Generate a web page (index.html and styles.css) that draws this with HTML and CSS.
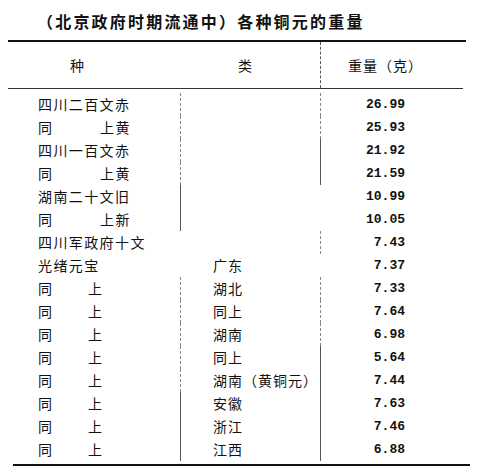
FILE: index.html
```html
<!DOCTYPE html>
<html lang="zh">
<head>
<meta charset="utf-8">
<title>各种铜元的重量</title>
<link rel="stylesheet" href="styles.css">
</head>
<body>
<div class="page">
  <h1 class="title">（北京政府时期流通中）各种铜元的重量</h1>
  <div class="table">
    <div class="head">
      <div class="head-kind"><span>种</span><span>类</span></div>
      <div class="head-weight">重量（克）</div>
    </div>
    <div class="body">
      <div class="row"><div class="c1">四川二百文赤</div><div class="c2 e-dash"></div><div class="c3 e-dash">26.99</div></div>
      <div class="row"><div class="c1"><span class="lead-wide">同</span>上黄</div><div class="c2 e-dash"></div><div class="c3 e-dash">25.93</div></div>
      <div class="row"><div class="c1">四川一百文赤</div><div class="c2 e-dash"></div><div class="c3 e-solid">21.92</div></div>
      <div class="row"><div class="c1"><span class="lead-wide">同</span>上黄</div><div class="c2 e-dash"></div><div class="c3 e-solid">21.59</div></div>
      <div class="row"><div class="c1">湖南二十文旧</div><div class="c2 e-solid"></div><div class="c3">10.99</div></div>
      <div class="row"><div class="c1"><span class="lead-wide">同</span>上新</div><div class="c2 e-solid"></div><div class="c3">10.05</div></div>
      <div class="row"><div class="c1">四川军政府十文</div><div class="c2"></div><div class="c3 e-dash">7.43</div></div>
      <div class="row"><div class="c1">光绪元宝</div><div class="c2">广东</div><div class="c3">7.37</div></div>
      <div class="row"><div class="c1"><span class="lead">同</span>上</div><div class="c2 e-dash">湖北</div><div class="c3 e-dash">7.33</div></div>
      <div class="row"><div class="c1"><span class="lead">同</span>上</div><div class="c2 e-dash">同上</div><div class="c3 e-dash">7.64</div></div>
      <div class="row"><div class="c1"><span class="lead">同</span>上</div><div class="c2 e-dash">湖南</div><div class="c3 e-dash">6.98</div></div>
      <div class="row"><div class="c1"><span class="lead">同</span>上</div><div class="c2 e-dash">同上</div><div class="c3 e-solid">5.64</div></div>
      <div class="row"><div class="c1"><span class="lead">同</span>上</div><div class="c2 e-dash">湖南（黄铜元）</div><div class="c3 e-solid">7.44</div></div>
      <div class="row"><div class="c1"><span class="lead">同</span>上</div><div class="c2 e-solid">安徽</div><div class="c3 e-solid">7.63</div></div>
      <div class="row"><div class="c1"><span class="lead">同</span>上</div><div class="c2 e-solid">浙江</div><div class="c3 e-solid">7.46</div></div>
      <div class="row"><div class="c1"><span class="lead">同</span>上</div><div class="c2 e-solid">江西</div><div class="c3 e-solid">6.88</div></div>
    </div>
  </div>
  <div class="rule-bottom"></div>
</div>
</body>
</html>
```

FILE: styles.css
```css
html, body {
  margin: 0;
  padding: 0;
  background: #ffffff;
}

body {
  font-family: "Noto Sans CJK SC", "Noto Sans", sans-serif;
  color: #111111;
}

.page {
  width: 494px;
  height: 475px;
  overflow: hidden;
}

.title {
  margin: 0;
  height: 40px;
  box-sizing: border-box;
  padding: 10px 0 0 37px;
  font-size: 16px;
  line-height: 22px;
  font-weight: 700;
  letter-spacing: 2.2px;
  white-space: nowrap;
}

.table {
  margin-left: 8px;
  width: 458px;
  border-top: 2px solid #111111;
}

.head {
  display: grid;
  grid-template-columns: 312px 146px;
  height: 46px;
  border-bottom: 1px solid #333333;
  margin-right: 3px;
}

.head-kind {
  display: flex;
  justify-content: space-between;
  align-items: center;
  padding: 0 68px 0 62px;
  font-size: 14px;
}

.head-weight {
  display: flex;
  align-items: center;
  padding-left: 27px;
  border-left: 1px dashed #555555;
  font-size: 14px;
  letter-spacing: 1px;
}

.body {
  padding-top: 4px;
  padding-bottom: 3px;
}

.row {
  display: grid;
  grid-template-columns: 172px 140px 146px;
  height: 23px;
  font-size: 14px;
  line-height: 23px;
  letter-spacing: 1.4px;
  white-space: nowrap;
}

.c1 {
  padding-left: 30px;
}

.c2 {
  padding-left: 32px;
  border-left: 1px solid transparent;
  letter-spacing: 1px;
}

.c3 {
  border-left: 1px solid transparent;
  text-align: right;
  padding-right: 61px;
  font-family: "Liberation Mono", "Courier New", monospace;
  font-weight: 700;
  font-size: 13px;
  letter-spacing: 0;
}

.e-solid {
  border-left-color: #555555;
}

.e-dash {
  border-left-style: dashed;
  border-left-color: #888888;
}

.lead {
  display: inline-block;
  width: 50px;
}

.lead-wide {
  display: inline-block;
  width: 62px;
}

.rule-bottom {
  margin-left: 13px;
  width: 457px;
  height: 2px;
  background: #111111;
}
```
